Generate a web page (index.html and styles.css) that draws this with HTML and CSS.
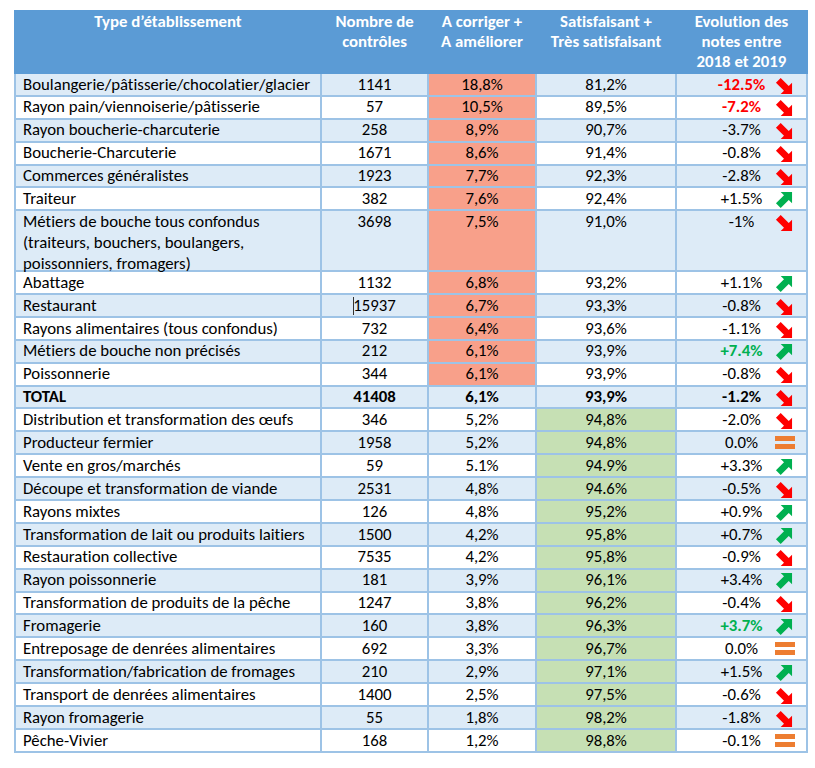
FILE: index.html
```html
<!DOCTYPE html>
<html lang="fr">
<head>
<meta charset="utf-8">
<title>Notes par type d'établissement</title>
<link rel="stylesheet" href="styles.css">
</head>
<body>
<svg class="defs" width="0" height="0" aria-hidden="true">
  <defs>
    <symbol id="down" viewBox="0 0 19 19"><polygon points="1,6 6,1 14.5,9.5 18,6 18,18 6,18 9.5,14.5" fill="#FF0000"/></symbol>
    <symbol id="up" viewBox="0 0 19 19"><polygon points="1,13 6,18 14.5,9.5 18,13 18,1 6,1 9.5,4.5" fill="#00B050"/></symbol>
    <symbol id="eq" viewBox="0 0 20 14"><rect x="0" y="0" width="20" height="5" fill="#ED7D31"/><rect x="0" y="8" width="20" height="5" fill="#ED7D31"/></symbol>
  </defs>
</svg>
<table class="grid">
  <colgroup>
    <col class="c1"><col class="c2"><col class="c3"><col class="c4"><col class="c5">
  </colgroup>
  <thead>
    <tr>
      <th>Type d’établissement</th>
      <th>Nombre de<br>contrôles</th>
      <th>A corriger +<br>A améliorer</th>
      <th>Satisfaisant +<br>Très satisfaisant</th>
      <th>Evolution des<br>notes entre<br>2018 et 2019</th>
    </tr>
  </thead>
  <tbody>
    <tr><td>Boulangerie/pâtisserie/chocolatier/glacier</td><td>1141</td><td class="bad">18,8%</td><td>81,2%</td><td><div class="evo"><span class="v neg">-12.5%</span><svg class="ic"><use href="#down"/></svg></div></td></tr>
    <tr><td>Rayon pain/viennoiserie/pâtisserie</td><td>57</td><td class="bad">10,5%</td><td>89,5%</td><td><div class="evo"><span class="v neg">-7.2%</span><svg class="ic"><use href="#down"/></svg></div></td></tr>
    <tr><td>Rayon boucherie-charcuterie</td><td>258</td><td class="bad">8,9%</td><td>90,7%</td><td><div class="evo"><span class="v">-3.7%</span><svg class="ic"><use href="#down"/></svg></div></td></tr>
    <tr><td>Boucherie-Charcuterie</td><td>1671</td><td class="bad">8,6%</td><td>91,4%</td><td><div class="evo"><span class="v">-0.8%</span><svg class="ic"><use href="#down"/></svg></div></td></tr>
    <tr><td>Commerces généralistes</td><td>1923</td><td class="bad">7,7%</td><td>92,3%</td><td><div class="evo"><span class="v">-2.8%</span><svg class="ic"><use href="#down"/></svg></div></td></tr>
    <tr><td>Traiteur</td><td>382</td><td class="bad">7,6%</td><td>92,4%</td><td><div class="evo"><span class="v">+1.5%</span><svg class="ic"><use href="#up"/></svg></div></td></tr>
    <tr class="tall"><td><div class="multi">Métiers de bouche tous confondus<br>(traiteurs, bouchers, boulangers,<br>poissonniers, fromagers)</div></td><td>3698</td><td class="bad">7,5%</td><td>91,0%</td><td><div class="evo"><span class="v">-1%</span><svg class="ic"><use href="#down"/></svg></div></td></tr>
    <tr><td>Abattage</td><td>1132</td><td class="bad">6,8%</td><td>93,2%</td><td><div class="evo"><span class="v">+1.1%</span><svg class="ic"><use href="#up"/></svg></div></td></tr>
    <tr><td>Restaurant</td><td><span class="caret"></span>15937</td><td class="bad">6,7%</td><td>93,3%</td><td><div class="evo"><span class="v">-0.8%</span><svg class="ic"><use href="#down"/></svg></div></td></tr>
    <tr><td>Rayons alimentaires (tous confondus)</td><td>732</td><td class="bad">6,4%</td><td>93,6%</td><td><div class="evo"><span class="v">-1.1%</span><svg class="ic"><use href="#down"/></svg></div></td></tr>
    <tr><td>Métiers de bouche non précisés</td><td>212</td><td class="bad">6,1%</td><td>93,9%</td><td><div class="evo"><span class="v pos">+7.4%</span><svg class="ic"><use href="#up"/></svg></div></td></tr>
    <tr><td>Poissonnerie</td><td>344</td><td class="bad">6,1%</td><td>93,9%</td><td><div class="evo"><span class="v">-0.8%</span><svg class="ic"><use href="#down"/></svg></div></td></tr>
    <tr class="total"><td>TOTAL</td><td>41408</td><td>6,1%</td><td>93,9%</td><td><div class="evo"><span class="v">-1.2%</span><svg class="ic"><use href="#down"/></svg></div></td></tr>
    <tr><td>Distribution et transformation des œufs</td><td>346</td><td>5,2%</td><td class="good">94,8%</td><td><div class="evo"><span class="v">-2.0%</span><svg class="ic"><use href="#down"/></svg></div></td></tr>
    <tr><td>Producteur fermier</td><td>1958</td><td>5,2%</td><td class="good">94,8%</td><td><div class="evo"><span class="v">0.0%</span><svg class="ic eqic"><use href="#eq"/></svg></div></td></tr>
    <tr><td>Vente en gros/marchés</td><td>59</td><td>5.1%</td><td class="good">94.9%</td><td><div class="evo"><span class="v">+3.3%</span><svg class="ic"><use href="#up"/></svg></div></td></tr>
    <tr><td>Découpe et transformation de viande</td><td>2531</td><td>4,8%</td><td class="good">94.6%</td><td><div class="evo"><span class="v">-0.5%</span><svg class="ic"><use href="#down"/></svg></div></td></tr>
    <tr><td>Rayons mixtes</td><td>126</td><td>4,8%</td><td class="good">95,2%</td><td><div class="evo"><span class="v">+0.9%</span><svg class="ic"><use href="#up"/></svg></div></td></tr>
    <tr><td>Transformation de lait ou produits laitiers</td><td>1500</td><td>4,2%</td><td class="good">95,8%</td><td><div class="evo"><span class="v">+0.7%</span><svg class="ic"><use href="#up"/></svg></div></td></tr>
    <tr><td>Restauration collective</td><td>7535</td><td>4,2%</td><td class="good">95,8%</td><td><div class="evo"><span class="v">-0.9%</span><svg class="ic"><use href="#down"/></svg></div></td></tr>
    <tr><td>Rayon poissonnerie</td><td>181</td><td>3,9%</td><td class="good">96,1%</td><td><div class="evo"><span class="v">+3.4%</span><svg class="ic"><use href="#up"/></svg></div></td></tr>
    <tr><td>Transformation de produits de la pêche</td><td>1247</td><td>3,8%</td><td class="good">96,2%</td><td><div class="evo"><span class="v">-0.4%</span><svg class="ic"><use href="#down"/></svg></div></td></tr>
    <tr><td>Fromagerie</td><td>160</td><td>3,8%</td><td class="good">96,3%</td><td><div class="evo"><span class="v pos">+3.7%</span><svg class="ic"><use href="#up"/></svg></div></td></tr>
    <tr><td>Entreposage de denrées alimentaires</td><td>692</td><td>3,3%</td><td class="good">96,7%</td><td><div class="evo"><span class="v">0.0%</span><svg class="ic eqic"><use href="#eq"/></svg></div></td></tr>
    <tr><td>Transformation/fabrication de fromages</td><td>210</td><td>2,9%</td><td class="good">97,1%</td><td><div class="evo"><span class="v">+1.5%</span><svg class="ic"><use href="#up"/></svg></div></td></tr>
    <tr><td>Transport de denrées alimentaires</td><td>1400</td><td>2,5%</td><td class="good">97,5%</td><td><div class="evo"><span class="v">-0.6%</span><svg class="ic"><use href="#down"/></svg></div></td></tr>
    <tr><td>Rayon fromagerie</td><td>55</td><td>1,8%</td><td class="good">98,2%</td><td><div class="evo"><span class="v">-1.8%</span><svg class="ic"><use href="#down"/></svg></div></td></tr>
    <tr><td>Pêche-Vivier</td><td>168</td><td>1,2%</td><td class="good">98,8%</td><td><div class="evo"><span class="v">-0.1%</span><svg class="ic eqic"><use href="#eq"/></svg></div></td></tr>
  </tbody>
</table>
</body>
</html>
```
FILE: styles.css
```css
html, body {
  margin: 0;
  padding: 0;
  background: #ffffff;
}
body {
  padding: 10px 0 0 14px;
  font-family: "Carlito", "Lato", "Liberation Sans", sans-serif;
  font-size: 16.8px;
  font-variant-ligatures: none;
  color: #000;
}
.defs {
  position: absolute;
  width: 0;
  height: 0;
}
.grid {
  border-collapse: collapse;
  table-layout: fixed;
  width: 792px;
}
.c1 { width: 306px; }
.c2 { width: 107px; }
.c3 { width: 108px; }
.c4 { width: 140px; }
.c5 { width: 131px; }

.grid th {
  background: #5B9BD5;
  color: #fff;
  font-weight: bold;
  line-height: 20px;
  padding: 0 4px;
  vertical-align: top;
  text-align: center;
  white-space: nowrap;
  border: 2px solid #5B9BD5;
}
.grid td {
  border: 2px solid #9DC3E6;
  line-height: 19.7px;
  padding: 0.6px 0;
  text-align: center;
  vertical-align: top;
  white-space: nowrap;
}
.grid td:first-child {
  text-align: left;
  padding-left: 7px;
}
.grid tr.tall td {
  line-height: 19.2px;
}
.grid tr.tall .multi {
  line-height: 20.8px;
  height: 57.6px;
  overflow: visible;
}
.grid tbody tr:nth-child(odd) td {
  background: #DDEBF7;
}
.grid tbody tr:nth-child(even) td {
  background: #ffffff;
}
.grid tbody tr td.bad {
  background: #F8A08A;
}
.grid tbody tr td.good {
  background: #C6E0B4;
}
.total td {
  font-weight: bold;
}
.evo {
  display: grid;
  grid-template-columns: 1fr auto 1fr;
  align-items: start;
  height: 19.7px;
}
.evo .v {
  grid-column: 2;
}
.evo .ic {
  grid-column: 3;
  justify-self: end;
  width: 18px;
  height: 18px;
  margin: 2px 13px 0 0;
  overflow: visible;
}
.evo .eqic {
  width: 20px;
  height: 14px;
  margin: 3px 11px 0 0;
}
.neg {
  color: #FF0000;
  font-weight: bold;
}
.pos {
  color: #00B050;
  font-weight: bold;
}
.caret {
  display: inline-block;
  width: 0;
  height: 18px;
  border-left: 1px solid #333;
  vertical-align: -4px;
  margin-right: -1px;
}
```
